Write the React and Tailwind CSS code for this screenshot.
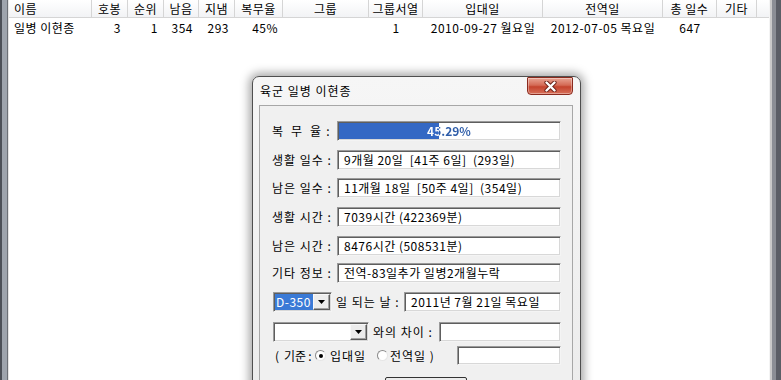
import React from "react";

const cols = [
  { t: "이름", w: "w-[83px]", h: "justify-start pl-[5px]", d: "일병 이현종", da: "justify-start pl-[5px]" },
  { t: "호봉", w: "w-[36px]", h: "justify-center", d: "3", da: "justify-end pr-[7px]" },
  { t: "순위", w: "w-[36px]", h: "justify-center", d: "1", da: "justify-end pr-[6px]" },
  { t: "남음", w: "w-[35px]", h: "justify-center", d: "354", da: "justify-end pr-[6px]" },
  { t: "지냄", w: "w-[36px]", h: "justify-center", d: "293", da: "justify-end pr-[6px]" },
  { t: "복무율", w: "w-[48px]", h: "justify-center", d: "45%", da: "justify-end pr-[5px]" },
  { t: "그룹", w: "w-[86px]", h: "justify-center", d: "", da: "justify-center" },
  { t: "그룹서열", w: "w-[54px]", h: "justify-center", d: "1", da: "justify-center" },
  { t: "입대일", w: "w-[120px]", h: "justify-center", d: "2010-09-27 월요일", da: "justify-center" },
  { t: "전역일", w: "w-[120px]", h: "justify-center", d: "2012-07-05 목요일", da: "justify-center" },
  { t: "총 일수", w: "w-[54px]", h: "justify-center", d: "647", da: "justify-center" },
  { t: "기타", w: "w-[40px]", h: "justify-center", d: "", da: "justify-center" },
];

function Sunken({ className = "", children }) {
  return (
    <div
      className={
        "relative shrink-0 bg-white border border-t-[#9a9a9a] border-l-[#9a9a9a] border-b-[#f4f4f4] border-r-[#f4f4f4] shadow-[inset_1px_1px_0_#5e5e5e,inset_-1px_-1px_0_#d8d8d8] " +
        className
      }
    >
      {children}
    </div>
  );
}

function TextBox({ className = "", text }) {
  return (
    <Sunken className={"flex items-center pl-[6px] whitespace-pre " + className}>
      {text}
    </Sunken>
  );
}

function DropBtn() {
  return (
    <div className="w-[17px] h-full flex items-center justify-center bg-[#ececec] border border-t-[#f8f8f8] border-l-[#f8f8f8] border-b-[#5a5a5a] border-r-[#5a5a5a] shadow-[inset_-1px_-1px_0_#a0a0a0]">
      <svg width="7" height="4" viewBox="0 0 7 4">
        <path d="M0 0 H7 L3.5 4 Z" fill="#000" />
      </svg>
    </div>
  );
}

function Label({ children }) {
  return <div className="w-[65px] shrink-0 whitespace-pre tracking-[1px]">{children}</div>;
}

function Radio({ checked, className = "" }) {
  return (
    <div className={"shrink-0 w-[11px] h-[11px] rounded-full bg-white border border-t-[#8a8a8a] border-l-[#8a8a8a] border-b-[#e6e6e6] border-r-[#e6e6e6] flex items-center justify-center " + className}>
      {checked && <div className="w-[4px] h-[4px] rounded-full bg-black" />}
    </div>
  );
}

export default function App() {
  return (
    <div className="relative w-[781px] h-[380px] overflow-hidden bg-white flex text-[12px] leading-none tracking-[0.5px] text-black font-['Noto_Sans_CJK_KR','Noto_Sans',sans-serif]">
      <div className="w-[9px] h-full shrink-0 bg-[linear-gradient(to_right,#4c5058_0px,#4c5058_2px,#9ea4ad_2px,#9ea4ad_7px,#6b6f76_7px,#6b6f76_8px,#e4e4e4_8px)]" />
      <div className="flex-1 flex flex-col">
        <div className="h-[18px] flex border-b border-[#d5d5d5] bg-[linear-gradient(#ffffff,#f2f3f5)]">
          {cols.map((c, i) => (
            <div key={i} className={"h-full flex items-center border-r border-[#d5d5d5] " + c.w + " " + c.h}>
              <span className="whitespace-pre">{c.t}</span>
            </div>
          ))}
          <div className="flex-1" />
        </div>
        <div className="h-[20px] flex">
          {cols.map((c, i) => (
            <div key={i} className={"h-full flex items-center " + c.w + " " + c.da}>
              <span className="whitespace-pre">{c.d}</span>
            </div>
          ))}
        </div>
      </div>
      <div className="w-[12px] h-full shrink-0 bg-[linear-gradient(to_right,#f4f4f4_0px,#f4f4f4_1px,#c9c9c9_1px,#c9c9c9_3px,#8b8e95_3px,#8b8e95_7px,#5b5e66_7px)]" />

      {/* Dialog */}
      <div className="absolute left-[252px] top-[76px] w-[329px] h-[320px] rounded-t-[7px] border border-[#4f4f4f] bg-[linear-gradient(#f6f6f6,#ececec)] shadow-[0_0_10px_3px_rgba(0,0,0,0.35)] flex flex-col">
        <div className="h-[28px] flex justify-between shrink-0">
          <span className="self-center pl-[7px] whitespace-pre tracking-[1px]">육군 일병 이현종</span>
          <div className="mr-[7px] w-[46px] h-[18px] rounded-b-[4px] rounded-t-[1px] border border-[#8a2a1e] bg-[linear-gradient(#e9a493,#d46a55_45%,#c4432d_55%,#d7705a)] flex items-center justify-center shadow-[inset_0_0_0_1px_rgba(255,255,255,0.35)]">
            <svg width="13" height="11" viewBox="0 0 13 11">
              <path d="M2.5 1.5 L10.5 9.5 M10.5 1.5 L2.5 9.5" stroke="#6a2016" strokeWidth="4.2" strokeLinecap="round" />
              <path d="M2.5 1.5 L10.5 9.5 M10.5 1.5 L2.5 9.5" stroke="#ffffff" strokeWidth="2.4" strokeLinecap="round" />
            </svg>
          </div>
        </div>
        <div className="ml-[6px] mr-[7px] flex-1 border border-[#a7a7a7] bg-[#f0f0f0] flex flex-col pl-[12px]">
          {/* progress */}
          <div className="mt-[15px] flex items-center">
            <Label>
              <div className="flex w-[61px] tracking-normal">
                <span>복</span>
                <span className="ml-[8px]">무</span>
                <span className="ml-[8px]">율</span>
                <span className="ml-[5px]">:</span>
              </div>
            </Label>
            <Sunken className="w-[224px] h-[20px] bg-[linear-gradient(to_right,#3468c4_45.29%,#ffffff_45.29%)]">
              <div className="w-full h-full flex items-center justify-center font-bold text-[12px] tracking-normal bg-[linear-gradient(to_right,#ffffff_45.29%,#2d5ca8_45.29%)] bg-clip-text text-transparent">
                45.29%
              </div>
            </Sunken>
          </div>
          <div className="mt-[9px] flex items-center">
            <Label>생활 일수 :</Label>
            <TextBox className="w-[224px] h-[20px]" text="9개월 20일  [41주 6일]  (293일)" />
          </div>
          <div className="mt-[8px] flex items-center">
            <Label>남은 일수 :</Label>
            <TextBox className="w-[224px] h-[20px]" text="11개월 18일  [50주 4일]  (354일)" />
          </div>
          <div className="mt-[9px] flex items-center">
            <Label>생활 시간 :</Label>
            <TextBox className="w-[224px] h-[20px]" text="7039시간 (422369분)" />
          </div>
          <div className="mt-[9px] flex items-center">
            <Label>남은 시간 :</Label>
            <TextBox className="w-[224px] h-[20px]" text="8476시간 (508531분)" />
          </div>
          <div className="mt-[7px] flex items-center">
            <Label>기타 정보 :</Label>
            <TextBox className="w-[224px] h-[20px]" text="전역-83일추가 일병2개월누락" />
          </div>
          <div className="mt-[9px] flex items-center">
            <Sunken className="ml-[1px] w-[59px] h-[20px] flex items-center p-[1px]">
              <div className="w-[39px] h-full flex items-center pl-[1px] bg-[#3a7ad6] text-white">D-350</div>
              <div className="flex-1 h-full"><DropBtn /></div>
            </Sunken>
            <span className="shrink-0 ml-[4px] w-[68px] whitespace-pre tracking-[1px]">일 되는 날 :</span>
            <TextBox className="w-[157px] h-[20px]" text="2011년 7월 21일 목요일" />
          </div>
          <div className="mt-[10px] flex items-center">
            <Sunken className="ml-[1px] w-[96px] h-[20px] flex justify-end p-[1px]">
              <DropBtn />
            </Sunken>
            <span className="shrink-0 ml-[4px] w-[66px] whitespace-pre tracking-[1px]">와의 차이 :</span>
            <TextBox className="w-[122px] h-[20px]" text="" />
          </div>
          <div className="mt-[4px] flex items-center">
            <div className="shrink-0 ml-[3px] w-[40px] flex tracking-normal">
              <span>(</span>
              <span className="ml-[5px]">기준</span>
              <span className="ml-[2px]">:</span>
            </div>
            <Radio checked />
            <span className="shrink-0 ml-[4px] w-[43px] whitespace-pre tracking-[1px]">입대일</span>
            <Radio className="ml-[4px]" />
            <span className="shrink-0 ml-[2px] w-[67px] whitespace-pre tracking-[1px]">전역일 )</span>
            <TextBox className="w-[104px] h-[19px]" text="" />
          </div>
          <div className="shrink-0 mt-[12px] ml-[113px] w-[82px] h-[22px] rounded-[2px] border border-[#333] bg-[#ececec]" />
        </div>
      </div>
    </div>
  );
}
